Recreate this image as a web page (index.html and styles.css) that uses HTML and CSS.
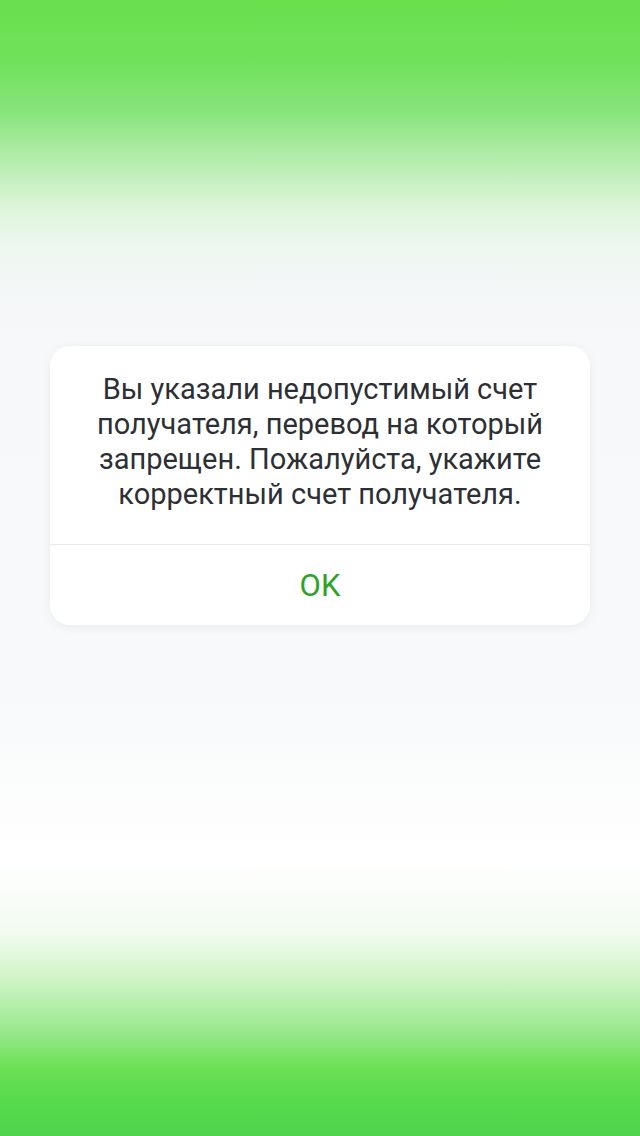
FILE: index.html
```html
<!DOCTYPE html>
<html lang="ru">
<head>
<meta charset="utf-8">
<link rel="stylesheet" href="styles.css">
</head>
<body>
<div class="screen">
  <div class="alert">
    <div class="alert-message">Вы указали недопустимый счет получателя, перевод на который запрещен. Пожалуйста, укажите корректный счет получателя.</div>
    <div class="alert-actions">
      <button class="alert-button">OK</button>
    </div>
  </div>
</div>
</body>
</html>
```

FILE: styles.css
```css
html, body {
  margin: 0;
  padding: 0;
}
body {
  font-family: Roboto, "Liberation Sans", sans-serif;
}
.screen {
  width: 640px;
  height: 1136px;
  display: flex;
  justify-content: center;
  align-items: flex-start;
  padding-top: 346px;
  box-sizing: border-box;
  background:
    linear-gradient(to bottom,
      #69e04e 0px,
      #70e159 60px,
      #86e47a 110px,
      #b5ecad 160px,
      #dcf4d9 205px,
      #eef7ef 245px,
      #f4f7f8 290px,
      #f6f8fa 340px,
      #f8f9fa 700px,
      #ffffff 860px,
      #f3fbf1 930px,
      #cef4c6 980px,
      #9be88e 1030px,
      #6ae052 1070px,
      #58da4c 1100px,
      #4dd44c 1136px);
}
.alert {
  width: 540px;
  background: #ffffff;
  border-radius: 20px;
  box-shadow: 0 2px 12px rgba(0, 0, 0, 0.06);
  display: flex;
  flex-direction: column;
  overflow: hidden;
}
.alert-message {
  padding: 26px 40px 32px;
  text-align: center;
  color: #2c3035;
  font-size: 29px;
  line-height: 35px;
  letter-spacing: 0;
}
.alert-actions {
  border-top: 1px solid #e8e9eb;
  display: flex;
}
.alert-button {
  flex: 1;
  height: 80px;
  border: 0;
  background: transparent;
  font-family: Roboto, "Liberation Sans", sans-serif;
  font-size: 31px;
  color: #2ea325;
  padding: 0;
}
```
